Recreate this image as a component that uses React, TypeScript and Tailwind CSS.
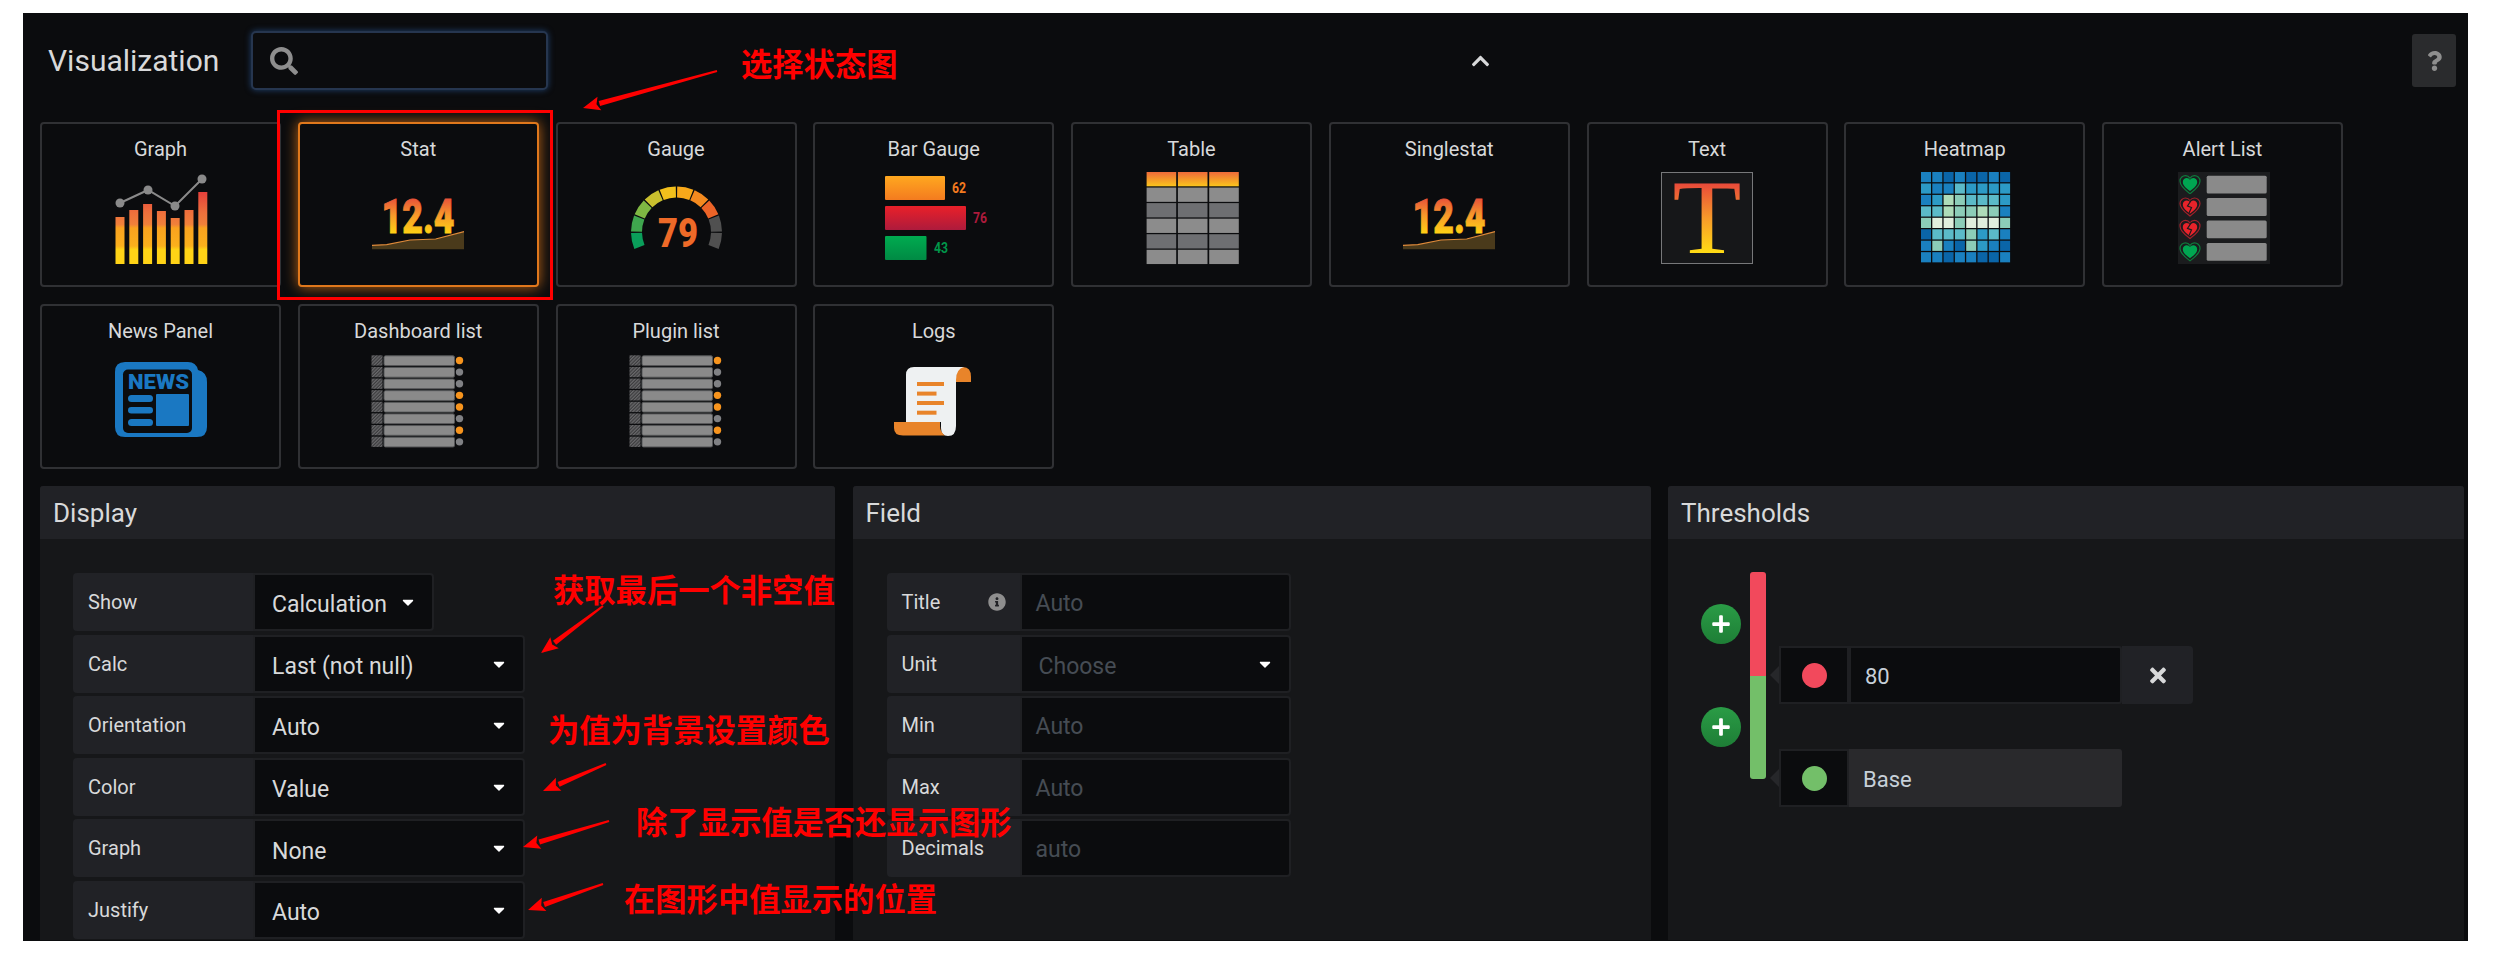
import React from 'react';
import { FaSearch, FaChevronUp, FaQuestion, FaInfoCircle, FaTimes, FaPlus, FaCaretDown } from 'react-icons/fa';

const IconBox = ({ children }: { children: React.ReactNode }) => (
  <svg viewBox="0 0 110 100" className="w-[110px] h-[100px] block overflow-visible">
    {children}
  </svg>
);

const GraphIcon = () => {
  const tops = [45, 38, 32, 39, 46, 38, 20];
  return (
    <IconBox>
      <defs>
        <linearGradient id="graphBars" gradientUnits="userSpaceOnUse" x1="0" y1="20" x2="0" y2="92">
          <stop offset="0" stopColor="#e5403b" />
          <stop offset="0.28" stopColor="#ee6f3c" />
          <stop offset="0.45" stopColor="#f0803a" />
          <stop offset="0.5" stopColor="#f9a21f" />
          <stop offset="0.75" stopColor="#fbb01c" />
          <stop offset="0.8" stopColor="#ffd316" />
          <stop offset="1" stopColor="#ffd316" />
        </linearGradient>
      </defs>
      <g transform="translate(5 4)">
        {tops.map((t, i) => (
          <rect key={i} x={4.5 + i * 13.8} y={t} width="9" height={92 - t} fill="url(#graphBars)" />
        ))}
        <polyline points="9,31 37,18 64,34 91,7" fill="none" stroke="#8a8a8a" strokeWidth="2" />
        <circle cx="9" cy="31" r="4.5" fill="#8a8a8a" />
        <circle cx="37" cy="18" r="4.5" fill="#8a8a8a" />
        <circle cx="64" cy="34" r="4.5" fill="#8a8a8a" />
        <circle cx="91" cy="7" r="4.5" fill="#8a8a8a" />
      </g>
    </IconBox>
  );
};

const StatIcon = ({ id }: { id: string }) => (
  <IconBox>
    <defs>
      <linearGradient id={id} gradientUnits="userSpaceOnUse" x1="0" y1="30" x2="0" y2="65">
        <stop offset="0" stopColor="#e8503a" />
        <stop offset="0.5" stopColor="#f79a2a" />
        <stop offset="1" stopColor="#ffd014" />
      </linearGradient>
    </defs>
    <text
      x="55"
      y="64.7"
      textAnchor="middle"
      fontFamily="Roboto, sans-serif"
      fontWeight="900"
      fontSize="48"
      textLength="73"
      lengthAdjust="spacingAndGlyphs"
      fill={`url(#${id})`}
      stroke={`url(#${id})`}
      strokeWidth="0.8"
    >
      12.4
    </text>
    <path d="M9 77.3 L23.7 76.7 L47 72 L72.7 71 L101 63.7 V81.3 H9 Z" fill="#4a3a1b" />
    <polyline points="9,77.3 23.7,76.7 47,72 72.7,71 101,63.7" fill="none" stroke="#df8a3a" strokeWidth="1.2" />
  </IconBox>
);

const gaugeColors = ['#0a9e5a', '#3fa64e', '#7fb843', '#c9c02e', '#f2c01c', '#f9a91a', '#f48a1f', '#ec6428', '#505050', '#505050'];

const arcPath = (a0: number, a1: number) => {
  const cx = 55.5;
  const cy = 64;
  const r = 40;
  const p = (a: number) => `${cx + r * Math.cos((a * Math.PI) / 180)} ${cy - r * Math.sin((a * Math.PI) / 180)}`;
  return `M${p(a0)} A${r} ${r} 0 0 1 ${p(a1)}`;
};

const GaugeIcon = () => (
  <IconBox>
    {gaugeColors.map((c, i) => {
      const step = 226 / 10;
      return <path key={i} d={arcPath(203 - i * step - 0.9, 203 - (i + 1) * step + 0.9)} fill="none" stroke={c} strokeWidth="11" />;
    })}
    <text x="57" y="79" textAnchor="middle" fontFamily="Roboto, sans-serif" fontWeight="900" fontSize="41" textLength="40" lengthAdjust="spacingAndGlyphs" fill="#ee6a28">
      79
    </text>
  </IconBox>
);

const BarGaugeIcon = () => (
  <IconBox>
    <defs>
      <linearGradient id="bgOrange" x1="0" y1="0" x2="0" y2="1">
        <stop offset="0" stopColor="#ffa81f" />
        <stop offset="1" stopColor="#f47b1f" />
      </linearGradient>
      <linearGradient id="bgRed" x1="0" y1="0" x2="0" y2="1">
        <stop offset="0" stopColor="#ea2029" />
        <stop offset="1" stopColor="#ad1b3c" />
      </linearGradient>
      <linearGradient id="bgGreen" x1="0" y1="0" x2="0" y2="1">
        <stop offset="0" stopColor="#00ab50" />
        <stop offset="1" stopColor="#008a44" />
      </linearGradient>
    </defs>
    <g transform="translate(5 4)" fontFamily="Roboto, sans-serif" fontWeight="700" fontSize="14">
      <rect x="1" y="4" width="60" height="24" rx="1" fill="url(#bgOrange)" />
      <text x="68" y="21" fill="#f47b1f" textLength="14" lengthAdjust="spacingAndGlyphs">62</text>
      <rect x="1" y="34" width="81" height="24" rx="1" fill="url(#bgRed)" />
      <text x="89" y="51" fill="#ad1b3c" textLength="14" lengthAdjust="spacingAndGlyphs">76</text>
      <rect x="1" y="64" width="41.5" height="24" rx="1" fill="url(#bgGreen)" />
      <text x="50" y="81" fill="#00964a" textLength="14" lengthAdjust="spacingAndGlyphs">43</text>
    </g>
  </IconBox>
);

const TableIcon = () => (
  <IconBox>
    <defs>
      <linearGradient id="tableHead" x1="0" y1="0" x2="0" y2="1">
        <stop offset="0" stopColor="#ee6a3a" />
        <stop offset="1" stopColor="#fbc51c" />
      </linearGradient>
    </defs>
    <g transform="translate(5 4)">
      {[0, 1, 2, 3, 4, 5].map((row) =>
        [0, 1, 2].map((col) => (
          <rect
            key={`${row}-${col}`}
            x={4.6 + col * 31.3}
            y={row * 15.55}
            width="29.6"
            height="14.3"
            fill={row === 0 ? 'url(#tableHead)' : row % 2 === 1 ? '#8c8c8c' : '#6e6f72'}
          />
        ))
      )}
    </g>
  </IconBox>
);

const TextIcon = () => (
  <IconBox>
    <defs>
      <linearGradient id="textT" gradientUnits="userSpaceOnUse" x1="0" y1="15" x2="0" y2="85">
        <stop offset="0" stopColor="#e8483a" />
        <stop offset="0.5" stopColor="#f79a2a" />
        <stop offset="1" stopColor="#ffdc14" />
      </linearGradient>
    </defs>
    <rect x="9.5" y="4.5" width="91" height="91" fill="#161719" stroke="#77787a" strokeWidth="1" />
    <text x="55" y="85" textAnchor="middle" fontFamily="'Liberation Serif', serif" fontSize="106" textLength="69" lengthAdjust="spacingAndGlyphs" fill="url(#textT)">
      T
    </text>
  </IconBox>
);

const d = '#0a65a8';
const b = '#1a80bf';
const c = '#2c9ac6';
const t = '#5bbac8';
const g = '#8ccdb8';
const l = '#aedcb9';
const w = '#e0eedd';
const heatmapRows = [
  [b, b, d, b, d, d, b, d],
  [c, b, b, t, c, c, c, c],
  [b, c, l, g, t, t, t, c],
  [t, t, l, g, g, l, g, b],
  [g, w, w, g, w, w, w, g],
  [d, t, t, t, g, c, t, b],
  [b, g, b, d, g, c, b, d],
  [b, b, d, b, b, d, d, b],
];

const HeatmapIcon = () => (
  <IconBox>
    {heatmapRows.map((row, y) =>
      row.map((color, x) => (
        <rect key={`${x}-${y}`} x={11 + x * 11.3} y={4 + y * 11.45} width="10" height="10.2" fill={color} />
      ))
    )}
  </IconBox>
);

const heartPath = 'M0 9 C-4 6 -10 2 -10 -3.5 C-10 -7 -7 -9 -4.5 -9 C-2.5 -9 -1 -8 0 -6.5 C1 -8 2.5 -9 4.5 -9 C7 -9 10 -7 10 -3.5 C10 2 4 6 0 9 Z';

const AlertListIcon = () => (
  <IconBox>
    <rect x="10" y="4" width="92" height="92" fill="#1b1c1e" />
    {[false, true, true, false].map((broken, i) => (
      <g key={i}>
        <rect x="38.7" y={7.7 + i * 22.4} width="60" height="17.8" rx="1.5" fill="#8a8a8a" />
        <g transform={`translate(22 ${16.6 + i * 22.4})`}>
          <path d={heartPath} fill="none" stroke={broken ? '#a3202a' : '#0f7a3c'} strokeWidth="1.2" />
          <path d={heartPath} transform="scale(0.72)" fill={broken ? '#e8232a' : '#00a651'} />
          {broken && <path d="M1.5 -7 L-2.5 -1 L1.5 0.5 L-1 6" fill="none" stroke="#1b1c1e" strokeWidth="1.2" />}
        </g>
      </g>
    ))}
  </IconBox>
);

const NewsIcon = () => (
  <IconBox>
    <path d="M19 12 H82 Q90 12 92 20 Q101 22 101 32 V77 Q101 87 91 87 H19 Q9 87 9 77 V22 Q9 12 19 12 Z" fill="#1a78c2" />
    <rect x="17" y="19.5" width="69" height="63.5" rx="5" fill="#0b0c0e" />
    <text x="22" y="38.5" fontFamily="Roboto, sans-serif" fontWeight="900" fontSize="20" textLength="61" lengthAdjust="spacingAndGlyphs" fill="#1a78c2">
      NEWS
    </text>
    <rect x="22" y="45" width="25" height="7" rx="3.5" fill="#1a78c2" />
    <rect x="22" y="57" width="25" height="6.5" rx="3.25" fill="#1a78c2" />
    <rect x="22" y="69" width="25" height="7" rx="3.5" fill="#1a78c2" />
    <rect x="50" y="44" width="33" height="32" rx="1" fill="#1a78c2" />
  </IconBox>
);

const ListIcon = ({ id }: { id: string }) => {
  const orange = [0, 3, 4, 6];
  return (
    <IconBox>
      <defs>
        <pattern id={id} width="2.4" height="2.4" patternUnits="userSpaceOnUse" patternTransform="rotate(45)">
          <rect width="2.4" height="2.4" fill="#3c3c3e" />
          <rect width="1.2" height="2.4" fill="#6a6a6c" />
        </pattern>
      </defs>
      <g transform="translate(1.5 0)">
        {[0, 1, 2, 3, 4, 5, 6, 7].map((i) => (
          <g key={i}>
            <rect x="7" y={5.3 + i * 11.62} width="11" height="10.3" fill={`url(#${id})`} />
            <rect x="19.5" y={5.8 + i * 11.62} width="70.5" height="9.8" rx="1.5" fill="#8a8a8a" stroke="#555658" strokeWidth="1" />
            <circle cx="95" cy={10.5 + i * 11.62} r="3.7" fill={orange.includes(i) ? '#f7941d' : '#808184'} />
          </g>
        ))}
      </g>
    </IconBox>
  );
};

const LogsIcon = () => (
  <IconBox>
    <path d="M84 17 Q92 17 92 27 V32 H77 V27 Q77 17 84 17 Z" fill="#e8842a" />
    <path d="M27 72 V25 Q27 17 35 17 H85 Q77 19 77 30 V76 Q77 86 69 86 Q62 86 62 78 V72 Z" fill="#eef1f2" />
    <path d="M15 72 H61 V76 Q61 82 66 85.5 H24 Q15 85.5 15 78 Z" fill="#e8842a" />
    <rect x="38" y="32" width="27" height="4" fill="#e8842a" />
    <rect x="38" y="41.6" width="19.5" height="4" fill="#e8842a" />
    <rect x="38" y="51" width="27" height="4" fill="#e8842a" />
    <rect x="38" y="60.7" width="19.5" height="4" fill="#e8842a" />
  </IconBox>
);

const cards: { name: string; icon: React.ReactNode; selected?: boolean }[] = [
  { name: 'Graph', icon: <GraphIcon /> },
  { name: 'Stat', icon: <StatIcon id="statText" />, selected: true },
  { name: 'Gauge', icon: <GaugeIcon /> },
  { name: 'Bar Gauge', icon: <BarGaugeIcon /> },
  { name: 'Table', icon: <TableIcon /> },
  { name: 'Singlestat', icon: <StatIcon id="singlestatText" /> },
  { name: 'Text', icon: <TextIcon /> },
  { name: 'Heatmap', icon: <HeatmapIcon /> },
  { name: 'Alert List', icon: <AlertListIcon /> },
  { name: 'News Panel', icon: <NewsIcon /> },
  { name: 'Dashboard list', icon: <ListIcon id="dashHatch" /> },
  { name: 'Plugin list', icon: <ListIcon id="pluginHatch" /> },
  { name: 'Logs', icon: <LogsIcon /> },
];

const VizCard = ({ name, icon, selected }: { name: string; icon: React.ReactNode; selected?: boolean }) => (
  <div
    className={`h-[165px] rounded-[4px] border-2 bg-[#0b0c0e] flex flex-col items-center ${
      selected ? 'border-[#e0781c] shadow-[0_0_14px_rgba(235,123,24,0.8)]' : 'border-[#303134]'
    }`}
  >
    <div className="h-[44px] pt-[11px] text-[20px] leading-[28px] text-[#d8d9da]">{name}</div>
    <div>{icon}</div>
  </div>
);

const Panel = ({ title, children }: { title: string; children: React.ReactNode }) => (
  <div className="bg-[#161719] rounded-t-[3px] flex flex-col">
    <div className="h-[53px] bg-[#212226] rounded-t-[3px] flex items-center pl-[13px] pt-[2px] text-[26px] text-[#d8d9da]">{title}</div>
    {children}
  </div>
);

const Row = ({ label, labelWidth, fieldWidth, children }: { label: React.ReactNode; labelWidth: string; fieldWidth: string; children: React.ReactNode }) => (
  <div className="flex h-[58px]">
    <div className={`${labelWidth} flex items-center justify-between pl-[15px] pr-[14px] bg-[#212226] rounded-l-[4px] text-[20px] text-[#d8d9da]`}>
      {label}
    </div>
    <div className={`${fieldWidth} relative flex items-center pt-[4px] pl-[17px] bg-[#0b0c0e] border-[2px] border-[#1f2023] rounded-r-[4px] text-[23px]`}>
      {children}
    </div>
  </div>
);

const Caret = () => <FaCaretDown className="absolute right-[15px] top-[18px] text-white w-[18px] h-[18px]" />;

const displayRows = [
  { label: 'Show', value: 'Calculation', width: 'w-[181px]' },
  { label: 'Calc', value: 'Last (not null)', width: 'w-[272px]' },
  { label: 'Orientation', value: 'Auto', width: 'w-[272px]' },
  { label: 'Color', value: 'Value', width: 'w-[272px]' },
  { label: 'Graph', value: 'None', width: 'w-[272px]' },
  { label: 'Justify', value: 'Auto', width: 'w-[272px]' },
];

const ThresholdRow = ({ color, children }: { color: string; children: React.ReactNode }) => (
  <div className="relative flex h-[58px] w-[343px]">
    <div className="absolute -left-[9px] top-[20px] border-y-[9px] border-r-[9px] border-y-transparent border-r-[#26272a]" />
    <div className="w-[70px] flex items-center justify-center bg-[#0b0c0e] border-[2px] border-[#1f2023]">
      <div className={`w-[25px] h-[25px] rounded-full ${color}`} />
    </div>
    {children}
  </div>
);

const PlusButton = () => (
  <div className="w-[40px] h-[40px] rounded-full bg-gradient-to-b from-[#2a9c46] to-[#1e7e36] flex items-center justify-center">
    <FaPlus className="text-white w-[20px] h-[20px]" />
  </div>
);

const notes = [
  { text: '选择状态图', pos: 'left-[741px] top-[43px]' },
  { text: '获取最后一个非空值', pos: 'left-[553px] top-[569px]' },
  { text: '为值为背景设置颜色', pos: 'left-[548px] top-[709px]' },
  { text: '除了显示值是否还显示图形', pos: 'left-[636px] top-[801px]' },
  { text: '在图形中值显示的位置', pos: 'left-[624px] top-[878px]' },
];

// tail x/y, tip x/y in page pixels
const arrows = [
  [717, 71, 583, 108],
  [603, 606, 541, 653],
  [606, 764, 543, 791],
  [609, 821, 523, 847],
  [603, 884, 528, 910],
];

const Arrow = ({ from }: { from: number[] }) => {
  const [x0, y0, x1, y1] = from;
  const len = Math.hypot(x1 - x0, y1 - y0);
  const ux = (x1 - x0) / len;
  const uy = (y1 - y0) / len;
  const bx = x1 - ux * 17;
  const by = y1 - uy * 17;
  return (
    <g fill="#ff0000">
      <polygon points={`${x0 - uy * 1},${y0 + ux * 1} ${x0 + uy * 1},${y0 - ux * 1} ${bx + uy * 2.6},${by - ux * 2.6} ${bx - uy * 2.6},${by + ux * 2.6}`} />
      <polygon points={`${x1},${y1} ${bx + uy * 7},${by - ux * 7} ${bx + ux * 3},${by + uy * 3} ${bx - uy * 7},${by + ux * 7}`} />
    </g>
  );
};

export default function App() {
  return (
    <div className="relative w-[2513px] h-[972px] bg-white overflow-hidden font-['Roboto',sans-serif]">
      <div className="ml-[23px] mt-[13px] absolute w-[2445px] h-[928px] bg-[#0b0c0e] overflow-hidden">
        <div className="flex items-center h-[90px] pt-[5px] pl-[25px] pr-[12px]">
          <div className="w-[203px] text-[30px] text-[#d8d9da]">Visualization</div>
          <div className="w-[297px] h-[59px] flex items-center pl-[17px] bg-[#0b0c0e] border-[2px] border-[#26364f] rounded-[5px] shadow-[0_0_6px_rgba(50,110,190,0.55)]">
            <FaSearch className="w-[28px] h-[28px] text-[#8e8e8e]" />
          </div>
          <div className="flex-1 flex justify-center">
            <FaChevronUp className="w-[25px] h-[20px] text-[#d8d9da]" />
          </div>
          <div className="w-[44px] h-[53px] flex items-center justify-center rounded-[3px] bg-[#2a2b2d]">
            <FaQuestion className="w-[15px] h-[22px] text-[#8e8e8e]" />
          </div>
        </div>

        <div className="mt-[19px] ml-[17px] grid grid-cols-[repeat(9,241px)] gap-x-[16.75px] gap-y-[17px]">
          {cards.map((card) => (
            <VizCard key={card.name} {...card} />
          ))}
        </div>

        <div className="mt-[17px] ml-[17px] w-[2424px] grid grid-cols-[795px_798px_796px] gap-x-[17.5px]">
          <Panel title="Display">
            <div className="h-[401px] pt-[34px] pl-[33px] flex flex-col gap-[3.6px]">
              {displayRows.map((row) => (
                <Row key={row.label} label={row.label} labelWidth="w-[180px]" fieldWidth={row.width}>
                  <span className="text-[#d8d9da] mt-[3px]">{row.value}</span>
                  <Caret />
                </Row>
              ))}
            </div>
          </Panel>

          <Panel title="Field">
            <div className="h-[401px] pt-[34px] pl-[34px] flex flex-col gap-[3.6px]">
              <Row
                label={
                  <>
                    <span>Title</span>
                    <FaInfoCircle className="w-[18px] h-[18px] text-[#8e8e8e]" />
                  </>
                }
                labelWidth="w-[133px]"
                fieldWidth="w-[271px]"
              >
                <span className="text-[#464c54] -ml-[3px]">Auto</span>
              </Row>
              <Row label="Unit" labelWidth="w-[133px]" fieldWidth="w-[271px]">
                <span className="text-[#464c54] mt-[3px]">Choose</span>
                <Caret />
              </Row>
              <Row label="Min" labelWidth="w-[133px]" fieldWidth="w-[271px]">
                <span className="text-[#464c54] -ml-[3px]">Auto</span>
              </Row>
              <Row label="Max" labelWidth="w-[133px]" fieldWidth="w-[271px]">
                <span className="text-[#464c54] -ml-[3px]">Auto</span>
              </Row>
              <Row label="Decimals" labelWidth="w-[133px]" fieldWidth="w-[271px]">
                <span className="text-[#464c54] -ml-[3px]">auto</span>
              </Row>
            </div>
          </Panel>

          <Panel title="Thresholds">
            <div className="h-[401px] pt-[33px] pl-[33px] flex">
              <div className="w-[40px] pt-[32px] flex flex-col gap-[63px]">
                <PlusButton />
                <PlusButton />
              </div>
              <div className="ml-[9px] w-[16px] h-[207px] flex flex-col rounded-[3px] overflow-hidden">
                <div className="h-[104px] bg-[#f2495c]" />
                <div className="h-[103px] bg-[#73bf69]" />
              </div>
              <div className="ml-[13px] pt-[74px] flex flex-col gap-[45px]">
                <div className="flex">
                  <ThresholdRow color="bg-[#f2495c]">
                    <div className="flex-1 flex items-center pl-[14px] pt-[3px] bg-[#0b0c0e] border-[2px] border-[#1f2023] rounded-r-[3px] text-[22px] text-[#c7d0d9]">80</div>
                  </ThresholdRow>
                  <div className="w-[71px] h-[58px] flex items-center justify-center bg-[#212226] rounded-r-[4px]">
                    <FaTimes className="w-[20px] h-[23px] text-[#d8d9da]" />
                  </div>
                </div>
                <ThresholdRow color="bg-[#73bf69]">
                  <div className="flex-1 flex items-center pl-[14px] pt-[3px] bg-[#29292c] rounded-r-[3px] text-[22px] text-[#c7d0d9]">Base</div>
                </ThresholdRow>
              </div>
            </div>
          </Panel>
        </div>
      </div>

      {/* annotations drawn over the screenshot */}
      <div className="absolute left-[277px] top-[110px] w-[276px] h-[190px] border-[3px] border-[#ff0000]" />
      <svg className="absolute inset-0 w-[2513px] h-[972px] pointer-events-none">
        {arrows.map((a, i) => (
          <Arrow key={i} from={a} />
        ))}
      </svg>
      {notes.map((note) => (
        <div key={note.text} className={`absolute ${note.pos} text-[31.3px] leading-[40px] font-bold whitespace-nowrap text-[#ff0000] font-['Noto_Sans_CJK_SC',sans-serif]`}>
          {note.text}
        </div>
      ))}
    </div>
  );
}
